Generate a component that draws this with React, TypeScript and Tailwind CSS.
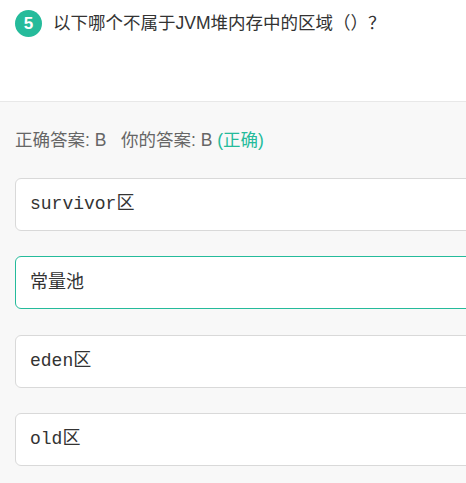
import React from "react";

interface Option {
  label: string;
  code: boolean;
  selected?: boolean;
}

const options: Option[] = [
  { label: "survivor区", code: true },
  { label: "常量池", code: false, selected: true },
  { label: "eden区", code: true },
  { label: "old区", code: true },
];

export default function App() {
  return (
    <div
      className="w-[466px] h-[483px] overflow-hidden bg-[#f8f8f8]"
      style={{ fontFamily: '"Liberation Sans", Arial, "Noto Sans CJK SC", sans-serif' }}
    >
      {/* question header */}
      <div className="h-[102px] bg-white border-b border-[#e8e8e8] flex items-start gap-[11px] px-[15px] pt-[10px]">
        <span className="w-[27px] h-[27px] rounded-full bg-[#25bb9b] text-white font-bold text-[17px] flex items-center justify-center shrink-0">
          5
        </span>
        <h2 className="text-[17.5px] leading-[27px] text-[#333] [text-spacing-trim:space-all]">
          以下哪个不属于JVM堆内存中的区域（）？
        </h2>
      </div>

      {/* answer + options */}
      <div className="px-[15px] pt-[26px]">
        <p className="text-[17.5px] leading-[24px] text-[#666] whitespace-pre">
          正确答案: B{"   "}你的答案: B <span className="text-[#25bb9b]">(正确)</span>
        </p>
        <ul className="mt-[26px] flex flex-col gap-[25.3px] w-[520px]">
          {options.map((o) => (
            <li
              key={o.label}
              className={
                "h-[53px] rounded-[6px] bg-white border flex items-center pl-[14px] text-[18px] text-[#333] " +
                (o.selected ? "border-[#25bb9b]" : "border-[#d9d9d9]")
              }
              style={
                o.code
                  ? { fontFamily: '"Liberation Mono", "Courier New", "Noto Sans CJK SC", monospace' }
                  : undefined
              }
            >
              {o.label}
            </li>
          ))}
        </ul>
      </div>
    </div>
  );
}
